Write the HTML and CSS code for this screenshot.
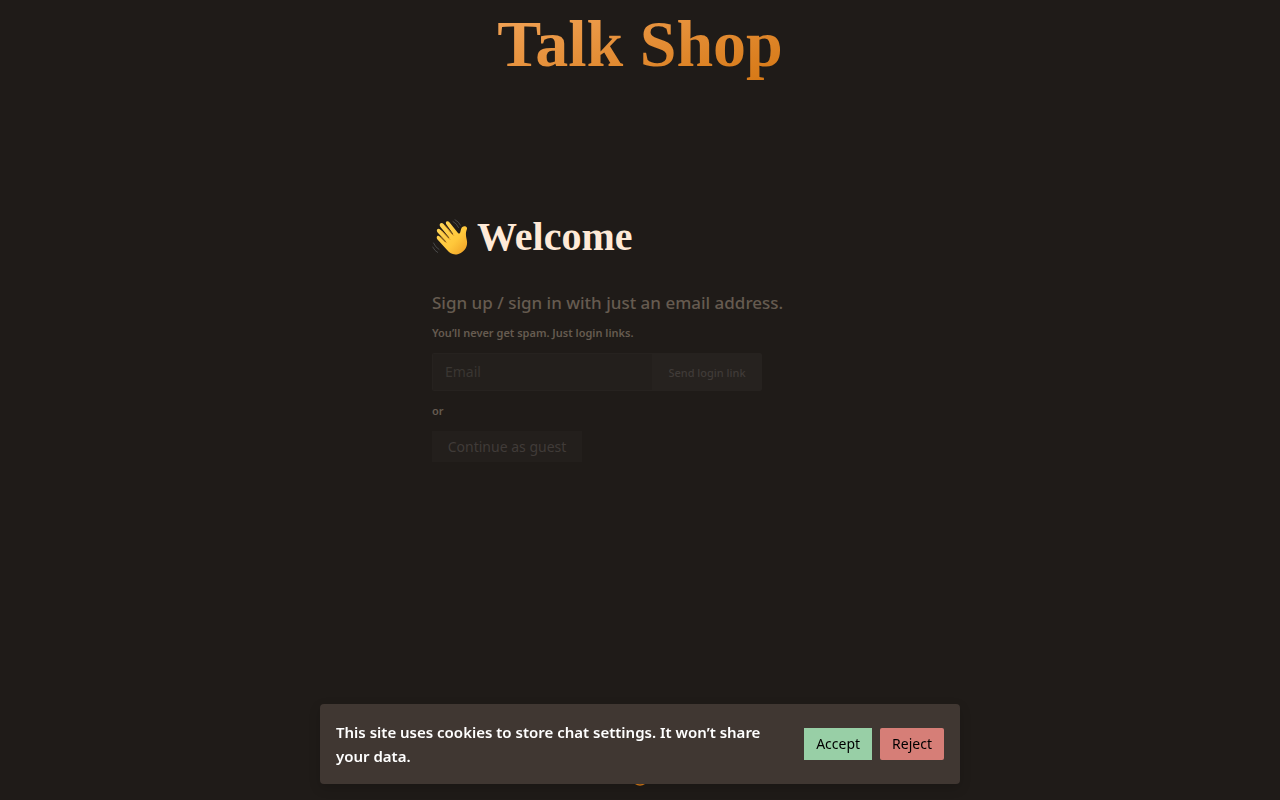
FILE: index.html
```
<!DOCTYPE html>
<html lang="en">
<head>
<meta charset="utf-8">
<meta name="viewport" content="width=device-width, initial-scale=1">
<title>Talk Shop</title>
<link rel="stylesheet" href="styles.css">
</head>
<body class="page">
<header class="header"><h1 class="brand">Talk Shop</h1></header>
<main class="welcome">
  <h2 class="welcome-title">
    <svg class="wave" viewBox="0 0 36 36" aria-hidden="true">
      <defs>
        <linearGradient id="skin" x1="0" y1="0" x2="1" y2="1"><stop offset="0" stop-color="#ffd75a"/><stop offset=".6" stop-color="#ffc83b"/><stop offset="1" stop-color="#ed9c23"/></linearGradient>
      </defs>
      <g fill="none" stroke="#494949" stroke-width="1" stroke-linecap="round"><path d="M21 2.5q4 2 5.500 6M23 .7q4 2 5.500 5.500M1.500 24q2 4.500 5.500 6.500M.7 28q2 4 5 5.500"/></g>
      <path fill="url(#skin)" d="M5.500 20.500C3.400 17.600 6 15.700 7.900 17.700L13.400 23.200L14 22.600L5.600 13.400C3.500 10.700 6.200 8.400 8.500 10.700L16.600 19.300L17.300 18.700L8.500 7.900C6.200 5 9.400 2.600 11.800 5.300L20.500 15.700L21.200 15.100L14.400 5.600C12.600 2.700 15.500 .8 17.600 3.500L26 14.100C27.200 15.300 28.200 14.300 28.500 12.300L29.100 9.900C29.800 7.500 32.300 6.700 34.100 7.800C35.800 8.900 34.900 10.100 34.300 12C33.600 14.300 33.900 17.500 34.700 20.500C36.400 27.500 32.500 33 26.500 34.900C21.500 36.400 18.100 34.500 15.300 31.300Z"/>
      <g fill="none" stroke="#d88a18" stroke-width=".8" stroke-linecap="round"><path d="M8.500 17.800l6 6M9.800 11.800l8 8.500M13 6.500l8.500 9.800"/></g>
    </svg>
    <span>Welcome</span>
  </h2>
  <form class="signup">
    <label class="signup-lead" for="email">Sign up / sign in with just an email address.</label>
    <p class="note">You’ll never get spam. Just login links.</p>
    <div class="email-row">
      <input class="email" id="email" type="email" placeholder="Email" disabled>
      <button class="send" type="submit" disabled>Send login link</button>
    </div>
    <p class="note">or</p>
    <button class="guest" type="button" disabled>Continue as guest</button>
  </form>
</main>
<footer class="footer">
  <svg class="footer-mark" viewBox="0 0 16 16" aria-hidden="true"><ellipse cx="8" cy="11" rx="6" ry="4" fill="none" stroke="#d97b16" stroke-width="1.3"/></svg>
</footer>
<aside class="cookies" aria-label="Cookie consent">
  <p class="cookies-text">This site uses cookies to store chat settings. It won’t share your data.</p>
  <div class="choices">
    <button class="choice accept" type="button">Accept</button>
    <button class="choice reject" type="button">Reject</button>
  </div>
</aside>
</body>
</html>
```
FILE: styles.css
```
* { box-sizing: border-box; }
.page {
  margin: 0;
  min-height: 100vh;
  display: flex;
  flex-direction: column;
  background: #1f1b18;
  color: #665b50;
  font-family: "Noto Sans", sans-serif;
}
button, input { font: inherit; }
.header { display: flex; justify-content: center; }
.brand {
  margin: 0;
  font: bold 66px/88px "Liberation Serif", serif;
  background: linear-gradient(to bottom right, #f4a75d, #d47510);
  background-clip: text;
  -webkit-background-clip: text;
  color: transparent;
}
.welcome {
  flex: 1;
  width: 100%;
  max-width: 448px;
  margin: 0 auto;
  padding: 125px 16px 0;
}
.welcome-title {
  display: flex;
  align-items: center;
  gap: 9px;
  margin: 0 0 28px;
  color: #ffead7;
  font: bold 40px/48px "Liberation Serif", serif;
}
.wave { width: 36px; height: 36px; }
.signup { display: flex; flex-direction: column; align-items: flex-start; }
.signup-lead { font-size: 17px; line-height: 28px; font-weight: 500; white-space: nowrap; margin-bottom: 8px; }
.note { margin: 0; font-size: 11px; line-height: 16px; font-weight: 600; }
.email-row { display: flex; width: 330px; max-width: 100%; height: 38px; margin: 12px 0; }
.email {
  flex: 1;
  min-width: 0;
  padding: 0 12px 2px;
  border: 1px solid #26221f;
  border-right: 0;
  border-radius: 2px 0 0 2px;
  background: #231f1c;
  font-size: 14px;
}
.email::placeholder { color: #3a3632; }
.send {
  width: 110px;
  padding: 0;
  border: 0;
  border-radius: 0 2px 2px 0;
  background: #26221f;
  color: #403b38;
  font-size: 11px;
  font-weight: 500;
}
.guest {
  margin-top: 12px;
  width: 150px;
  height: 31px;
  padding: 0;
  border: 0;
  background: #231f1c;
  color: #403b38;
  font-size: 14px;
}
.footer { display: flex; justify-content: center; padding-bottom: 14px; }
.footer-mark { width: 16px; height: 16px; }
.cookies {
  position: fixed;
  bottom: 16px;
  left: 0;
  right: 0;
  display: flex;
  align-items: center;
  justify-content: space-between;
  gap: 32px;
  width: 50%;
  min-width: 320px;
  margin: 0 auto;
  padding: 16px;
  border-radius: 4px;
  background: #403732;
  box-shadow: 0 4px 12px rgba(0, 0, 0, .16);
}
.cookies-text { margin: 0; color: #fff; font-size: 15px; line-height: 24px; font-weight: 600; }
.choices { display: flex; flex-shrink: 0; gap: 8px; }
.choice { height: 32px; padding: 0 12px 2px; border: 0; color: #000; font-size: 14px; }
.accept { background: #98cfa6; }
.reject { background: #d67e77; border-radius: 2px; }
```
